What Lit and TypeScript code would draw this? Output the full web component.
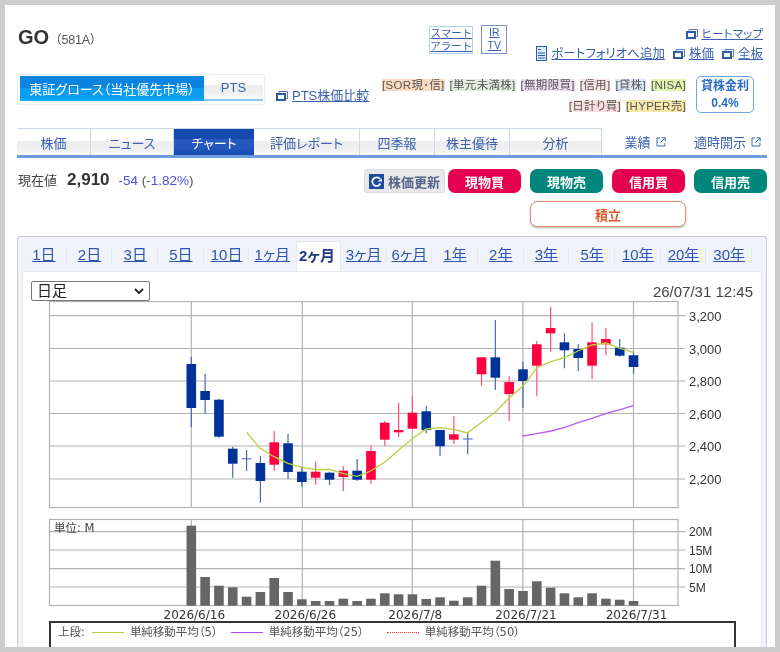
import { LitElement, html, css, svg } from 'lit';
import { customElement } from 'lit/decorators.js';

// [wick top, wick bottom, body top, body bottom, up?] in page pixels
const CANDLES: [number, number, number, number, boolean][] = [
  [357, 427, 364, 408, false], [373.7, 414, 391, 400, false], [399, 438, 399.7, 436.7, false],
  [446.7, 477.7, 448.7, 463.7, false], [450, 471, 458.3, 459.3, false], [456, 502.7, 463, 481, false],
  [431, 471, 442.3, 464.7, true], [434, 479, 443.3, 472, false], [466.7, 486.7, 471.7, 482, false],
  [461.7, 485, 471.7, 477.7, true], [471.7, 485, 472.7, 479.7, false], [466, 491, 470.7, 477, true],
  [459, 481, 470.7, 479.7, false], [445.3, 483.7, 451, 479.7, true], [421, 446, 422.7, 439.7, true],
  [402.7, 437, 430, 432.3, true], [396.3, 429, 412.7, 428.7, true], [406, 433.3, 411.3, 430, false],
  [430, 456, 430, 446.3, false], [416, 444, 434.3, 439.7, true], [433, 454, 438.5, 439.5, false],
  [357.3, 385.7, 357.3, 374.3, true], [320, 390, 357.3, 377.7, false], [375.7, 421, 382, 394, true],
  [361.7, 408, 369.3, 381, false], [341, 396.3, 344.3, 365.7, true], [307, 351.7, 328, 333.3, true],
  [333.3, 368.3, 342.3, 350.3, false], [344.3, 371, 349, 358, false], [322.3, 379, 342.3, 365.7, true],
  [328, 355, 339, 344.3, true], [339, 356.7, 347.7, 355.7, false], [351.7, 373.7, 355.3, 367, false],
];

const VOLUME_TOPS = [
  525.7, 577, 585.7, 587.3, 596.7, 592, 578, 592, 599.3, 601, 601, 598.7, 601, 598.7, 593.3,
  594.3, 594.3, 599, 597.3, 600.7, 597.3, 585.7, 560.7, 589, 591, 581.3, 587.7, 593.3, 597.3, 593.3, 598.7, 599.7, 601,
];

const MA5 = '246.7,432.3 260,448.3 274,456.7 288,463.3 302,467.3 315.5,469.7 329.5,469.3 343.7,473.7 357.3,476.3 370.7,471 384.7,462.3 390,457.7 398.7,450 412,439 426,429 440,427.7 454,429.3 467.3,433 481.7,422.3 495.7,411.7 509.7,397.3 523.3,385.7 537,367.7 551,361.7 565,357.3 578,351 592,345 606.3,343 620.3,348.3 633.7,352.7';
const MA25 = '522.7,436 537,433.7 551,431 565,427.3 578,422.7 592,418.3 606.3,413.3 620.3,409.7 633.7,405.3';

const PRICE_TICKS: [number, string][] = [[315.7, '3,200'], [348.5, '3,000'], [381, '2,800'], [413.5, '2,600'], [446, '2,400'], [479, '2,200']];
const VOL_TICKS: [number, string][] = [[531.7, '20M'], [550, '15M'], [568.7, '10M'], [587, '5M']];
const V_LINES = [191.3, 302.3, 412.3, 522.9, 633.5];
const DATES = ['2026/6/16', '2026/6/26', '2026/7/8', '2026/7/21', '2026/7/31'];

const RANGES = ['1日', '2日', '3日', '5日', '10日', '1ヶ月', '2ヶ月', '3ヶ月', '6ヶ月', '1年', '2年', '3年', '5年', '10年', '20年', '30年'];
const NAV = ['株価', 'ニュース', 'チャート', '評価レポート', '四季報', '株主優待', '分析'];

const winIcon = html`<svg class="win" width="12" height="10" viewBox="0 0 12 10">
  <path d="M3 2.5V.5h8.5v7H9.5" fill="none" stroke="#5a7cba" stroke-width="1"/>
  <rect x="1" y="3" width="8" height="6" fill="#fff" stroke="#2f5aa8" stroke-width="2"/>
</svg>`;

const extIcon = html`<svg class="ext" width="10" height="10" viewBox="0 0 10 10">
  <path d="M4 1H1v8h8V6" fill="none" stroke="#3b6cc0"/>
  <path d="M5.5 .8h3.7v3.7M9 1 4.5 5.5" fill="none" stroke="#3b6cc0"/>
</svg>`;

@customElement('app-root')
export class AppRoot extends LitElement {
  static styles = css`
    :host {
      display: block;
      height: 652px;
      overflow: hidden;
      box-sizing: border-box;
      padding: 5px 5px 0;
      background: #ccc;
      font-family: "Liberation Sans", "Noto Sans CJK JP", sans-serif;
      font-feature-settings: "palt";
      color: #333;
    }
    a { color: #3a62b0; text-decoration: underline; }
    svg { display: block; flex: none; }

    .panel {
      height: 642px;
      overflow: hidden;
      box-sizing: border-box;
      background: #fff;
      padding: 20px 8px 0 12px;
      filter: blur(0.35px);
    }

    /* title row */
    .head { display: flex; align-items: flex-start; height: 49px; }
    .title { flex: 1; display: flex; align-items: baseline; margin: 1px 0 0 1px; }
    .title b { font-size: 20px; color: #333; }
    .title span { font-size: 12.5px; color: #555; margin-left: 0; font-feature-settings: normal; letter-spacing: -.2px; }
    .alert {
      width: 44px;
      height: 28px;
      box-sizing: border-box;
      border: 1px solid #a8d4f8;
      font-size: 10.5px;
      font-feature-settings: normal;
      line-height: 13px;
      text-align: center;
      margin-top: 1px;
    }
    .alert a { display: block; }
    .irtv {
      width: 26px;
      height: 29px;
      box-sizing: border-box;
      border: 1px solid #7a90c8;
      font-size: 10.5px;
      line-height: 13px;
      text-align: center;
      margin: 0 0 0 8px;
    }
    .irtv a { display: block; }
    .links {
      margin-left: 29px;
      margin-right: 4px;
      display: flex;
      flex-direction: column;
      align-items: flex-end;
      gap: 5px;
      font-size: 12.5px;
      line-height: 14px;
      padding-top: 2px;
    }
    .links div { display: flex; align-items: center; }
    .links .win { margin: 0 4px 0 8px; }
    .links .heat { font-size: 11.7px; }

    /* market row */
    .market { display: flex; align-items: flex-start; height: 54px; }
    .mtabs {
      display: flex;
      box-sizing: border-box;
      width: 248px;
      height: 31px;
      padding: 1px 1px 3px 2px;
      border: 1px solid #e8ebf2;
      font-size: 13px;
      color: #fff;
    }
    .mtabs div { display: flex; align-items: center; justify-content: center; }
    .mtabs .on {
      width: 184px;
      background: linear-gradient(#0a84e0 0 50%, #0d9cf0 50% 85%, #14adf8);
    }
    .mtabs .off {
      flex: 1;
      color: #3a62b0;
      border-bottom: 2px solid #86cbf2;
      background: linear-gradient(#fff 0 40%, #eee 40% 70%, #f8f8f8);
    }
    .pts { display: flex; align-items: center; margin: 14px 0 0 11px; font-size: 13px; line-height: 16px; }
    .pts .win { margin-right: 4px; }
    .tags {
      flex: 1;
      margin: 5px 10px 0 0;
      display: flex;
      flex-wrap: wrap;
      justify-content: flex-end;
      gap: 9px 5px;
      font-size: 11.5px;
      letter-spacing: .3px;
      line-height: 12px;
      color: #555;
    }
    .sor { background: #fcdcc0; }
    .odd { background: #e2efdf; }
    .inf { background: #ecdcf4; }
    .mrg { background: #fbe4e4; }
    .len { background: #dde7f8; }
    .nisa { background: #e2f2b0; }
    .day { background: #fadede; }
    .hyper { background: #f8e8a8; }
    .rate {
      width: 58px;
      height: 37px;
      box-sizing: border-box;
      margin: 2px 13px 0 0;
      border: 1px solid #6ea5ea;
      border-radius: 5px;
      text-align: center;
      color: #2a6cc8;
      font-weight: bold;
      font-size: 12px;
      line-height: 17px;
      padding-top: 1px;
    }

    /* nav */
    .nav {
      display: grid;
      grid-template-columns: 74px 83px 80px 106px 75px 75px 92px 86px 79px;
      height: 30px;
      box-sizing: border-box;
      border-bottom: 3px solid #6c9be0;
      font-size: 13px;
      color: #3a62b0;
    }
    .nav div { display: flex; align-items: center; justify-content: center; gap: 5px; }
    .nav .t {
      border-top: 1px solid #cdd8ea;
      border-right: 1px solid #cdd8ea;
      background: linear-gradient(#fff 0 45%, #eee 45% 70%, #f8f8f8);
    }
    .nav .on {
      color: #fff;
      border-right: 0;
      background: linear-gradient(#174aae 0 40%, #2558bc 40% 70%, #174aae);
    }

    /* price row */
    .price { display: flex; align-items: flex-start; height: 78px; padding-top: 11px; box-sizing: border-box; }
    .now { display: flex; align-items: baseline; flex: 1; margin: 1px 0 0 1px; }
    .now .lb { font-size: 13px; color: #444; }
    .now b { font-size: 17px; margin: 0 9px 0 10px; color: #333; }
    .now .ch { font-size: 13.5px; color: #5050e0; }
    .now .par { font-size: 13.5px; color: #555; }
    .actions { display: grid; grid-template-columns: repeat(4, 73px); column-gap: 9px; row-gap: 8px; }
    .refresh {
      display: flex;
      align-items: center;
      gap: 4px;
      width: 81px;
      height: 24px;
      box-sizing: border-box;
      margin-right: 3px;
      padding-left: 4px;
      background: #e8e8ea;
      border: 1px solid #ddd;
      border-radius: 3px;
      font-size: 13px;
      font-weight: bold;
      color: #55648a;
    }
    .btn {
      height: 24px;
      border-radius: 7px;
      color: #fff;
      font-size: 13px;
      font-weight: bold;
      display: flex;
      align-items: center;
      justify-content: center;
    }
    .buy { background: #e60050; }
    .sell { background: #00867a; }
    .tsumi {
      grid-column: 2 / 4;
      width: 156px;
      height: 26px;
      box-sizing: border-box;
      border: 1px solid #e08a6c;
      border-radius: 7px;
      background: #fff;
      box-shadow: 0 1px 2px #bbb;
      color: #d85a28;
      font-size: 13px;
      font-weight: bold;
      display: flex;
      align-items: center;
      justify-content: center;
    }

    /* chart frame */
    .frame {
      height: 420px;
      box-sizing: border-box;
      background: #f0f3fa;
      border: 1px solid #ccc;
      border-bottom: 0;
      border-radius: 3px 3px 0 0;
      padding: 4px 4px 0;
    }
    .ranges {
      display: grid;
      grid-template-columns: repeat(16, 45.7px);
      height: 30px;
      margin-left: -1px;
      font-size: 15px;
      line-height: 18px;
    }
    .ranges div { display: flex; align-items: center; justify-content: center; position: relative; padding-bottom: 2px; box-sizing: border-box; }
    .ranges a { color: #2b55b0; }
    .ranges .sep::after {
      content: '';
      position: absolute;
      right: 0;
      top: 8px;
      height: 14px;
      width: 1px;
      background: #e2e5ec;
    }
    .ranges .on {
      background: #fff;
      border: 1px solid #e4e8f2;
      border-bottom: 0;
      border-radius: 3px 3px 0 0;
      margin-left: 1px;
      padding-right: 3px;
      font-weight: bold;
      color: #1d3a80;
    }
    .inner {
      height: 380px;
      background: #fff;
      border: 1px solid #e4e8f2;
      border-radius: 3px 3px 0 0;
      box-sizing: border-box;
    }
    .tools {
      display: flex;
      justify-content: space-between;
      align-items: center;
      height: 29px;
      padding: 9px 8px 0 8px;
      box-sizing: border-box;
    }
    .select {
      width: 119px;
      height: 20px;
      box-sizing: border-box;
      border: 1px solid #777;
      border-radius: 2px;
      padding: 0 5px;
      font-size: 15px;
      line-height: 18px;
      color: #222;
      display: flex;
      align-items: center;
      justify-content: space-between;
      background: #fff;
    }
    .stamp { font-size: 15px; color: #444; }
    .legend {
      width: 687px;
      height: 40px;
      box-sizing: border-box;
      margin-left: 26px;
      border: 2px solid #333;
      border-bottom: 0;
      padding-left: 7px;
      display: flex;
      align-items: flex-start;
      font-size: 11.5px;
      line-height: 18px;
      color: #555;
      font-family: "DejaVu Sans", "Noto Sans CJK JP", sans-serif;
    }
    .legend i { display: block; width: 32px; height: 1px; margin: 9px 6px 0; }
    .legend .g { background: #b4d23c; margin-left: 7px; }
    .legend .p { background: #a64dff; margin-left: 13px; }
    .legend .r { border-top: 1px dotted #f03a2e; height: 0; margin-left: 23px; }

    .axis { font-family: "Liberation Sans", sans-serif; font-size: 13px; fill: #333; }
    .dates { font-family: "DejaVu Sans", sans-serif; font-size: 12px; fill: #333; }
    .unit { font-family: "DejaVu Sans", "Noto Sans CJK JP", sans-serif; font-size: 11.5px; fill: #444; }
  `;

  renderChart() {
    const xAt = (i: number) => 191.3 + i * 13.82;
    return html`<svg width="738" height="320" viewBox="23 301 738 320" shape-rendering="geometricPrecision">
      <g stroke="#b2b2b2" stroke-width="1.2" fill="none">
        <rect x="49.5" y="301.5" width="628.5" height="206"/>
        <rect x="49.5" y="519.5" width="628.5" height="86"/>
        ${PRICE_TICKS.map(([y]) => svg`<path d="M49.5 ${y}H685"/>`)}
        ${VOL_TICKS.map(([y]) => svg`<path d="M49.5 ${y}H685"/>`)}
        ${V_LINES.map((x) => svg`<path d="M${x} 301.5V507.5M${x} 519.5V605.5"/>`)}
      </g>
      ${CANDLES.map(([wt, wb, bt, bb, up], i) => {
        const x = xAt(i);
        const doji = bb - bt < 1.2;
        return svg`
          <path d="M${x} ${wt}V${wb}" stroke=${up ? '#ff5078' : '#4568b4'} stroke-width="1.2"/>
          <rect x=${x - (doji ? 5 : 4.8)} y=${bt} width=${doji ? 10 : 9.6} height=${bb - bt} fill=${up ? '#ff0040' : doji ? '#4568b4' : '#003399'}/>`;
      })}
      <polyline points=${MA5} fill="none" stroke="#b4d23c" stroke-width="1.3"/>
      <polyline points=${MA25} fill="none" stroke="#b45cf5" stroke-width="1.3"/>
      ${VOLUME_TOPS.map((t, i) => svg`<rect x=${xAt(i) - 4.8} y=${t} width="9.6" height=${605.7 - t} fill="#666"/>`)}
      <g class="axis">
        ${PRICE_TICKS.map(([y, t]) => svg`<text x="689" y=${y + 5}>${t}</text>`)}
        ${VOL_TICKS.map(([y, t]) => svg`<text x="689" y=${y + 4.5} font-size="12">${t}</text>`)}
      </g>
      <text class="unit" x="54" y="532">単位: M</text>
      <g class="dates" text-anchor="middle">
        ${DATES.map((d, i) => svg`<text x=${V_LINES[i] + 3} y="619">${d}</text>`)}
      </g>
    </svg>`;
  }

  render() {
    return html`
      <div class="panel">
        <div class="head">
          <div class="title"><b>GO</b><span>（581A）</span></div>
          <div class="alert"><a>スマート</a><a>アラート</a></div>
          <div class="irtv"><a>IR</a><a>TV</a></div>
          <div class="links">
            <div class="heat">${winIcon}<a>ヒートマップ</a></div>
            <div>
              <svg width="11" height="15" viewBox="0 0 11 15" style="margin-right:4px">
                <rect x=".5" y=".5" width="10" height="14" fill="#dcebfa" stroke="#2f5aa8"/>
                <path d="M2 3.5h3M2 7h7M2 9.5h7M2 12h7" stroke="#2f5aa8"/>
              </svg><a>ポートフォリオへ追加</a>${winIcon}<a>株価</a>${winIcon}<a>全板</a>
            </div>
          </div>
        </div>

        <div class="market">
          <div class="mtabs">
            <div class="on">東証グロース（当社優先市場）</div>
            <div class="off">PTS</div>
          </div>
          <div class="pts">${winIcon}<a>PTS株価比較</a></div>
          <div class="tags">
            <span class="sor">[SOR現･信]</span>
            <span class="odd">[単元未満株]</span>
            <span class="inf">[無期限買]</span>
            <span class="mrg">[信用]</span>
            <span class="len">[貸株]</span>
            <span class="nisa">[NISA]</span>
            <span class="day">[日計り買]</span>
            <span class="hyper">[HYPER売]</span>
          </div>
          <div class="rate">貸株金利<br />0.4%</div>
        </div>

        <div class="nav">
          ${NAV.map((n) => html`<div class="t ${n === 'チャート' ? 'on' : ''}">${n}</div>`)}
          <div>業績 ${extIcon}</div>
          <div>適時開示 ${extIcon}</div>
        </div>

        <div class="price">
          <div class="now">
            <span class="lb">現在値</span><b>2,910</b>
            <span class="ch">-54&nbsp;</span><span class="par">(</span><span class="ch">-1.82%</span><span class="par">)</span>
          </div>
          <div class="refresh">
            <svg width="15" height="15" viewBox="0 0 15 15">
              <rect width="15" height="15" fill="#1c4ba0"/>
              <path d="M11.5 9.5A4.3 4.3 0 1 1 11 5" fill="none" stroke="#fff" stroke-width="1.8"/>
              <path d="M8.5 7.5h4.5v-3z" fill="#fff"/>
            </svg>株価更新
          </div>
          <div class="actions">
            <div class="btn buy">現物買</div>
            <div class="btn sell">現物売</div>
            <div class="btn buy">信用買</div>
            <div class="btn sell">信用売</div>
            <div class="tsumi">積立</div>
          </div>
        </div>

        <div class="frame">
          <div class="ranges">
            ${RANGES.map((r, i) => {
              if (r === '2ヶ月') return html`<div class="on">${r}</div>`;
              const sep = RANGES[i + 1] !== '2ヶ月';
              return html`<div class=${sep ? 'sep' : ''}><a>${r}</a></div>`;
            })}
          </div>
          <div class="inner">
            <div class="tools">
              <div class="select">
                <span>日足</span>
                <svg width="10" height="6" viewBox="0 0 10 6"><path d="M1 1l4 4 4-4" fill="none" stroke="#222" stroke-width="1.8"/></svg>
              </div>
              <span class="stamp">26/07/31 12:45</span>
            </div>
            ${this.renderChart()}
            <div class="legend">
              <span>上段:</span><i class="g"></i><span>単純移動平均（5）</span>
              <i class="p"></i><span>単純移動平均（25）</span>
              <i class="r"></i><span>単純移動平均（50）</span>
            </div>
          </div>
        </div>
      </div>
    `;
  }
}
